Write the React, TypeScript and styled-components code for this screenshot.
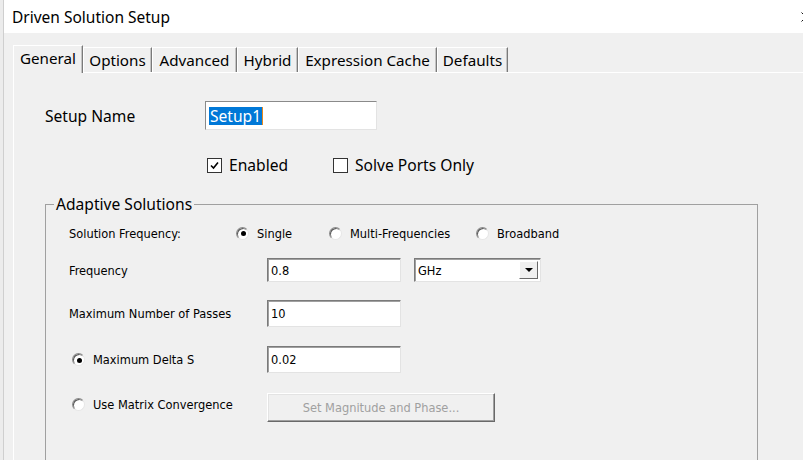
import React from "react";
import styled, { createGlobalStyle } from "styled-components";

const UI = `"Noto Sans", "Open Sans", sans-serif`;
const SMALL = `"DejaVu Sans Condensed", "Liberation Sans", sans-serif`;

const Global = createGlobalStyle`
  *, *::before, *::after { box-sizing: border-box; }
  html, body { margin: 0; padding: 0; background: #f0f0f0; overflow: hidden; }
  #root { width: 803px; height: 460px; overflow: hidden; }
`;

const Screen = styled.div`
  display: flex;
  width: 803px;
  height: 460px;
  overflow: hidden;
  background: #f0f0f0;
`;

const BehindWindow = styled.div`
  flex: 0 0 4px;
  background: #ececec;
  border-right: 1px solid #cfcfcf;
`;

const Dialog = styled.div`
  flex: 0 0 826px;
  display: flex;
  flex-direction: column;
`;

const TitleBar = styled.div`
  height: 33px;
  flex: 0 0 33px;
  background: #ffffff;
  display: flex;
  align-items: center;
  padding-left: 8px;
`;

const Title = styled.div`
  font-family: ${UI};
  font-size: 15.5px;
  color: #000;
  flex: 1;
`;

const CloseButton = styled.div`
  width: 48px;
  height: 33px;
  display: flex;
  align-items: center;
  justify-content: center;
`;

const Body = styled.div`
  flex: 1;
  display: flex;
  flex-direction: column;
  padding: 12px 0 0 9px;
  background: #f0f0f0;
`;

const TabStrip = styled.div`
  display: flex;
  align-items: flex-end;
  height: 27px;
  position: relative;
  z-index: 1;
`;

const Tab = styled.div<{ $w: number; $active?: boolean }>`
  width: ${(p) => p.$w}px;
  height: ${(p) => (p.$active ? 28 : 25)}px;
  margin-bottom: ${(p) => (p.$active ? -1 : 0)}px;
  display: flex;
  align-items: center;
  justify-content: center;
  padding-bottom: ${(p) => (p.$active ? 3 : 1)}px;
  font-family: ${UI};
  font-size: 15.2px;
  color: #000;
  background: #f0f0f0;
  border-top: 1px solid #ffffff;
  border-left: 1px solid #ffffff;
  border-right: 1px solid #7a7a7a;
  box-shadow: inset -1px 0 0 #c4c4c4;
`;

const Panel = styled.div`
  flex: 1;
  border-top: 1px solid #ffffff;
  border-left: 1px solid #ffffff;
  display: flex;
  flex-direction: column;
`;

const SetupRow = styled.div`
  display: flex;
  align-items: center;
  margin-top: 28px;
  padding-left: 31px;
`;

const BigLabel = styled.div<{ $w?: number }>`
  width: ${(p) => (p.$w ? `${p.$w}px` : "auto")};
  font-family: ${UI};
  font-size: 15.6px;
  color: #000;
`;

const NameInput = styled.div`
  width: 172px;
  height: 29px;
  background: #fff;
  border-top: 1px solid #8a8a8a;
  border-left: 1px solid #8a8a8a;
  border-right: 1px solid #e3e3e3;
  border-bottom: 1px solid #e3e3e3;
  display: flex;
  align-items: center;
  padding-left: 3px;
  font-family: ${UI};
  font-size: 15.6px;
`;

const Selected = styled.span`
  background: #0078d7;
  color: #fff;
  line-height: 18px;
  height: 18px;
  padding: 0 1px;
`;

const Caret = styled.span`
  width: 1px;
  height: 18px;
  background: #e8891c;
`;

const CheckRow = styled.div`
  display: flex;
  align-items: center;
  height: 20px;
  margin-top: 25px;
  padding-left: 193px;
`;

const CheckOption = styled.div<{ $w?: number }>`
  display: flex;
  align-items: center;
  gap: 7px;
  width: ${(p) => (p.$w ? `${p.$w}px` : "auto")};
`;

const CheckBox = styled.div`
  width: 15px;
  height: 15px;
  background: #fff;
  border: 1px solid #333;
  display: flex;
  align-items: center;
  justify-content: center;
`;

const Group = styled.fieldset`
  margin: 19px 0 0 31px;
  padding: 0;
  width: 713px;
  height: 300px;
  border: 1px solid #a0a0a0;
  min-width: 0;
`;

const Legend = styled.legend`
  margin-left: 8px;
  padding: 0 2px;
  font-family: ${UI};
  font-size: 15.6px;
  line-height: 20px;
  color: #000;
`;

const Row = styled.div<{ $top: number; $h: number }>`
  display: flex;
  align-items: center;
  margin-top: ${(p) => p.$top}px;
  height: ${(p) => p.$h}px;
  padding-left: 23px;
`;

const SmallLabel = styled.div<{ $w?: number }>`
  width: ${(p) => (p.$w ? `${p.$w}px` : "auto")};
  font-family: ${SMALL};
  font-size: 12.7px;
  color: #000;
`;

const RadioOption = styled.div<{ $w?: number; $indent?: number; $raise?: number }>`
  display: flex;
  align-items: center;
  gap: 8px;
  width: ${(p) => (p.$w ? `${p.$w}px` : "auto")};
  padding-left: ${(p) => p.$indent || 0}px;
  margin-bottom: ${(p) => (p.$raise || 0) * 2}px;
  font-family: ${SMALL};
  font-size: 12.7px;
  color: #000;
`;

const Radio = styled.div<{ $on?: boolean }>`
  width: 13px;
  height: 13px;
  border-radius: 50%;
  background: #fff;
  border: 1px solid;
  border-color: #8a8a8a #e6e6e6 #e6e6e6 #8a8a8a;
  box-shadow: inset 1px 1px 0 #5a5a5a;
  display: flex;
  align-items: center;
  justify-content: center;
  flex: 0 0 13px;
  &::after {
    content: "";
    display: ${(p) => (p.$on ? "block" : "none")};
    width: 5px;
    height: 5px;
    margin: 1px 0 0 1px;
    border-radius: 50%;
    background: #000;
  }
`;

const TextBox = styled.div<{ $w: number; $h: number }>`
  width: ${(p) => p.$w}px;
  height: ${(p) => p.$h}px;
  background: #fff;
  border-top: 1px solid #7a7a7a;
  border-left: 1px solid #7a7a7a;
  border-right: 1px solid #e3e3e3;
  border-bottom: 1px solid #e3e3e3;
  box-shadow: inset 1px 1px 0 #a0a0a0;
  display: flex;
  align-items: center;
  padding-left: 3px;
  font-family: ${SMALL};
  font-size: 12.7px;
  color: #000;
`;

const Combo = styled(TextBox)`
  margin-left: 13px;
  justify-content: space-between;
  padding-right: 2px;
`;

const ComboButton = styled.div`
  width: 19px;
  height: 18px;
  background: #f0f0f0;
  border-top: 1px solid #fff;
  border-left: 1px solid #fff;
  border-right: 1px solid #696969;
  border-bottom: 1px solid #696969;
  display: flex;
  align-items: center;
  justify-content: center;
`;

const Arrow = styled.div`
  width: 0;
  height: 0;
  border-left: 4px solid transparent;
  border-right: 4px solid transparent;
  border-top: 4px solid #000;
`;

const DisabledButton = styled.div`
  width: 228px;
  height: 29px;
  background: #f0f0f0;
  border-top: 1px solid #fff;
  border-left: 1px solid #fff;
  border-right: 1px solid #696969;
  border-bottom: 1px solid #696969;
  box-shadow: inset -1px -1px 0 #a0a0a0, inset 1px 1px 0 #e3e3e3;
  display: flex;
  align-items: center;
  justify-content: center;
  font-family: ${SMALL};
  font-size: 12.7px;
  color: #a0a0a0;
`;

const tabs: { label: string; w: number }[] = [
  { label: "General", w: 70 },
  { label: "Options", w: 69 },
  { label: "Advanced", w: 85 },
  { label: "Hybrid", w: 61 },
  { label: "Expression Cache", w: 139 },
  { label: "Defaults", w: 71 },
];

const Check = () => (
  <svg width="11" height="11" viewBox="0 0 11 11">
    <polyline points="2,5.5 4.5,8 9,2.5" fill="none" stroke="#000" strokeWidth="1.6" />
  </svg>
);

const CloseIcon = () => (
  <svg width="10" height="10" viewBox="0 0 10 10">
    <path d="M0.5 0.5 L9.5 9.5 M9.5 0.5 L0.5 9.5" stroke="#111" strokeWidth="1" />
  </svg>
);

export default function App() {
  return (
    <>
      <Global />
      <Screen>
        <BehindWindow />
        <Dialog>
          <TitleBar>
            <Title>Driven Solution Setup</Title>
            <CloseButton>
              <CloseIcon />
            </CloseButton>
          </TitleBar>
          <Body>
            <TabStrip>
              {tabs.map((t, i) => (
                <Tab key={t.label} $w={t.w} $active={i === 0}>
                  {t.label}
                </Tab>
              ))}
            </TabStrip>
            <Panel>
              <SetupRow>
                <BigLabel $w={160}>Setup Name</BigLabel>
                <NameInput>
                  <Selected>Setup1</Selected>
                  <Caret />
                </NameInput>
              </SetupRow>
              <CheckRow>
                <CheckOption $w={126}>
                  <CheckBox>
                    <Check />
                  </CheckBox>
                  <BigLabel>Enabled</BigLabel>
                </CheckOption>
                <CheckOption>
                  <CheckBox />
                  <BigLabel>Solve Ports Only</BigLabel>
                </CheckOption>
              </CheckRow>
              <Group>
                <Legend>Adaptive Solutions</Legend>
                <Row $top={7} $h={24}>
                  <SmallLabel $w={167}>Solution Frequency:</SmallLabel>
                  <RadioOption $w={93}>
                    <Radio $on />
                    Single
                  </RadioOption>
                  <RadioOption $w={147}>
                    <Radio />
                    Multi-Frequencies
                  </RadioOption>
                  <RadioOption>
                    <Radio />
                    Broadband
                  </RadioOption>
                </Row>
                <Row $top={13} $h={24}>
                  <SmallLabel $w={198}>Frequency</SmallLabel>
                  <TextBox $w={134} $h={24}>0.8</TextBox>
                  <Combo $w={127} $h={24}>
                    GHz
                    <ComboButton>
                      <Arrow />
                    </ComboButton>
                  </Combo>
                </Row>
                <Row $top={18} $h={27}>
                  <SmallLabel $w={198}>Maximum Number of Passes</SmallLabel>
                  <TextBox $w={134} $h={27}>10</TextBox>
                </Row>
                <Row $top={19} $h={27}>
                  <RadioOption $w={198} $indent={3}>
                    <Radio $on />
                    Maximum Delta S
                  </RadioOption>
                  <TextBox $w={134} $h={27}>0.02</TextBox>
                </Row>
                <Row $top={20} $h={29}>
                  <RadioOption $w={198} $indent={3} $raise={3}>
                    <Radio />
                    Use Matrix Convergence
                  </RadioOption>
                  <DisabledButton>Set Magnitude and Phase...</DisabledButton>
                </Row>
              </Group>
            </Panel>
          </Body>
        </Dialog>
      </Screen>
    </>
  );
}
